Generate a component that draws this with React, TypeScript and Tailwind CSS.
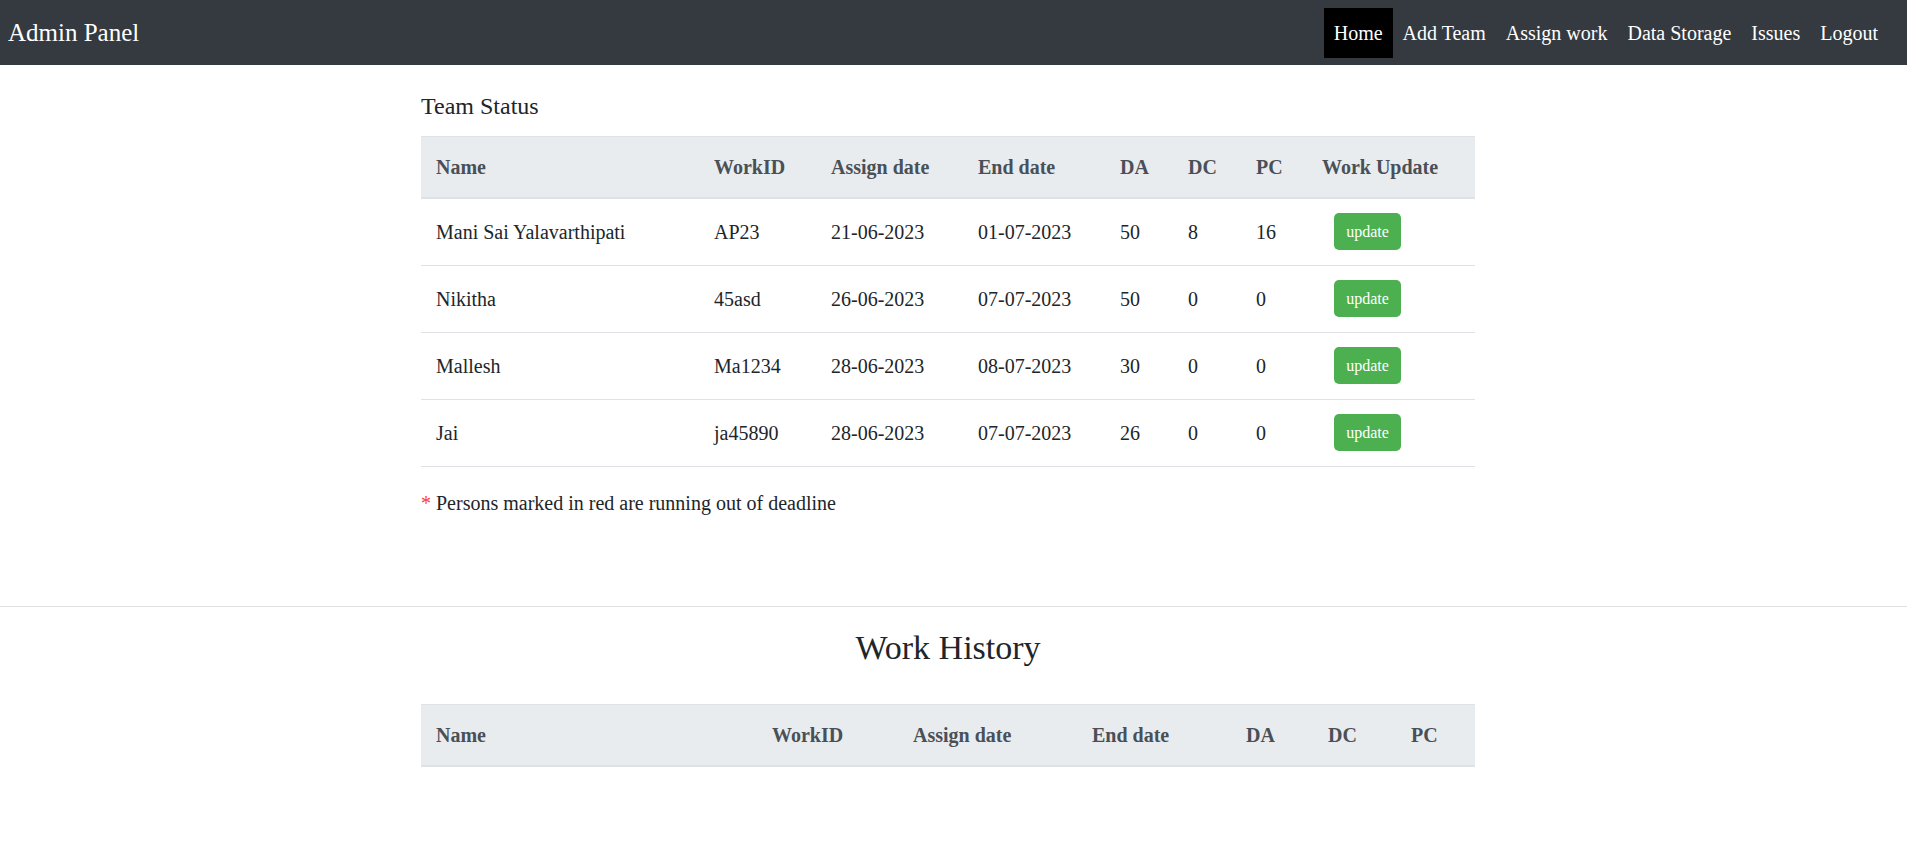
import React from "react"

const team = [
  { name: "Mani Sai Yalavarthipati", id: "AP23", assign: "21-06-2023", end: "01-07-2023", da: "50", dc: "8", pc: "16" },
  { name: "Nikitha", id: "45asd", assign: "26-06-2023", end: "07-07-2023", da: "50", dc: "0", pc: "0" },
  { name: "Mallesh", id: "Ma1234", assign: "28-06-2023", end: "08-07-2023", da: "30", dc: "0", pc: "0" },
  { name: "Jai", id: "ja45890", assign: "28-06-2023", end: "07-07-2023", da: "26", dc: "0", pc: "0" },
]

const links = ["Home", "Add Team", "Assign work", "Data Storage", "Issues", "Logout"]

export default function App() {
  return (
    <div className="min-h-screen bg-white text-[#212529] font-['Liberation_Serif','Times_New_Roman',serif]">
      <nav className="h-[65px] bg-[#343a40] flex items-center justify-between pl-[8px] pr-[19px]">
        <span className="text-white text-[25px] leading-none">Admin Panel</span>
        <ul className="flex items-center">
          {links.map((l, i) => (
            <li key={l}>
              <a
                href="#"
                className={`block px-[10px] py-[10px] text-[20px] leading-[30px] text-white ${i === 0 ? "bg-black" : ""}`}
              >
                {l}
              </a>
            </li>
          ))}
        </ul>
      </nav>

      <div className="ml-[421px] w-[1054px]">
        <h5 className="text-[24px] leading-[30px] pt-[26px] pb-[15px]">Team Status</h5>
        <table className="w-full table-fixed border-collapse text-[20px]">
          <thead>
            <tr className="bg-[#e9ecef] text-[#495057] border-t border-[#dee2e6] border-b-2">
              <th className="w-[278px] text-left font-bold px-[15px] py-[15px] leading-[30px]">Name</th>
              <th className="w-[117px] text-left font-bold px-[15px] leading-[30px]">WorkID</th>
              <th className="w-[147px] text-left font-bold px-[15px] leading-[30px]">Assign date</th>
              <th className="w-[142px] text-left font-bold px-[15px] leading-[30px]">End date</th>
              <th className="w-[68px] text-left font-bold px-[15px] leading-[30px]">DA</th>
              <th className="w-[68px] text-left font-bold px-[15px] leading-[30px]">DC</th>
              <th className="w-[66px] text-left font-bold px-[15px] leading-[30px]">PC</th>
              <th className="w-[168px] text-left font-bold px-[15px] leading-[30px]">Work Update</th>
            </tr>
          </thead>
          <tbody>
            {team.map((r) => (
              <tr key={r.id} className="border-b border-[#dee2e6] h-[67px]">
                <td className="px-[15px] leading-[30px]">{r.name}</td>
                <td className="px-[15px] leading-[30px]">{r.id}</td>
                <td className="px-[15px] leading-[30px]">{r.assign}</td>
                <td className="px-[15px] leading-[30px]">{r.end}</td>
                <td className="px-[15px] leading-[30px]">{r.da}</td>
                <td className="px-[15px] leading-[30px]">{r.dc}</td>
                <td className="px-[15px] leading-[30px]">{r.pc}</td>
                <td className="px-[15px]">
                  <button className="ml-[12px] h-[37px] w-[67px] rounded-[5px] bg-[#4CAF50] text-white text-[16px] leading-none">
                    update
                  </button>
                </td>
              </tr>
            ))}
          </tbody>
        </table>
        <p className="mt-[21px] text-[20px] leading-[30px]">
          <span className="text-[#ff3b3b]">*</span> Persons marked in red are running out of deadline
        </p>
      </div>

      <hr className="mt-[88px] border-0 border-t border-[#e0e0e0]" />

      <div className="ml-[421px] w-[1054px]">
        <h2 className="text-center text-[34px] leading-[40px] pt-[21px] pb-[36px]">Work History</h2>
        <table className="w-full table-fixed border-collapse text-[20px]">
          <thead>
            <tr className="bg-[#e9ecef] text-[#495057] border-t border-[#dee2e6] border-b-2">
              <th className="w-[336px] text-left font-bold px-[15px] py-[15px] leading-[30px]">Name</th>
              <th className="w-[141px] text-left font-bold px-[15px] leading-[30px]">WorkID</th>
              <th className="w-[179px] text-left font-bold px-[15px] leading-[30px]">Assign date</th>
              <th className="w-[154px] text-left font-bold px-[15px] leading-[30px]">End date</th>
              <th className="w-[82px] text-left font-bold px-[15px] leading-[30px]">DA</th>
              <th className="w-[83px] text-left font-bold px-[15px] leading-[30px]">DC</th>
              <th className="w-[79px] text-left font-bold px-[15px] leading-[30px]">PC</th>
            </tr>
          </thead>
          <tbody />
        </table>
      </div>
    </div>
  )
}
